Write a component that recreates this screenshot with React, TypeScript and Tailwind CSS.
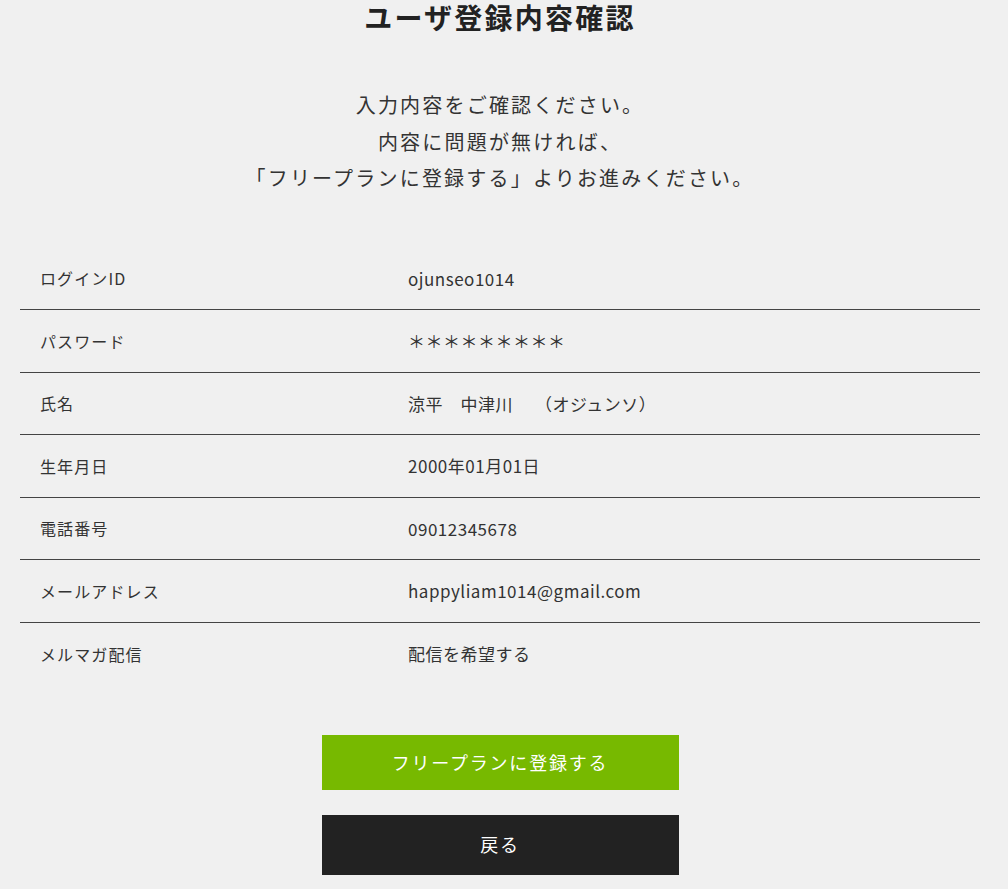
const rows: [string, string][] = [
  ["ログインID", "ojunseo1014"],
  ["パスワード", "＊＊＊＊＊＊＊＊＊"],
  ["氏名", "涼平　中津川　 （オジュンソ）"],
  ["生年月日", "2000年01月01日"],
  ["電話番号", "09012345678"],
  ["メールアドレス", "happyliam1014@gmail.com"],
  ["メルマガ配信", "配信を希望する"],
];

export default function App() {
  return (
    <div className="min-h-screen bg-[#f0f0f0] text-[#333] font-['Noto_Sans_CJK_JP','Noto_Sans',sans-serif]">
      <div className="w-[1000px] px-[20px] pb-[15px]">
        <h1 className="h-[33px] pt-[1px] text-center text-[28px] font-bold leading-[32px] tracking-[0.08em] text-[#222]">
          ユーザ登録内容確認
        </h1>

        <p className="mt-[54px] text-center text-[20px] leading-[36.5px] tracking-[0.11em]">
          入力内容をご確認ください。
          <br />
          内容に問題が無ければ、
          <br />
          「フリープランに登録する」よりお進みください。
        </p>

        <div className="mt-[51px]">
          {rows.map(([label, value], i) => (
            <div
              key={label}
              className={`box-border flex h-[62.5px] items-center ${
                i < rows.length - 1 ? "border-b border-[#444]" : ""
              }`}
            >
              <div className="w-[388px] pl-[20px] text-[16px] tracking-[0.07em]">{label}</div>
              <div className="text-[17px] tracking-[0.03em]">{value}</div>
            </div>
          ))}
        </div>

        <div className="mt-[49.5px] flex flex-col items-center gap-[25px]">
          <button className="h-[55px] w-[357px] bg-[#77b900] text-[18px] tracking-[0.1em] text-white">
            フリープランに登録する
          </button>
          <button className="h-[60px] w-[357px] bg-[#222] text-[18px] tracking-[0.1em] text-white">
            戻る
          </button>
        </div>
      </div>
    </div>
  );
}
